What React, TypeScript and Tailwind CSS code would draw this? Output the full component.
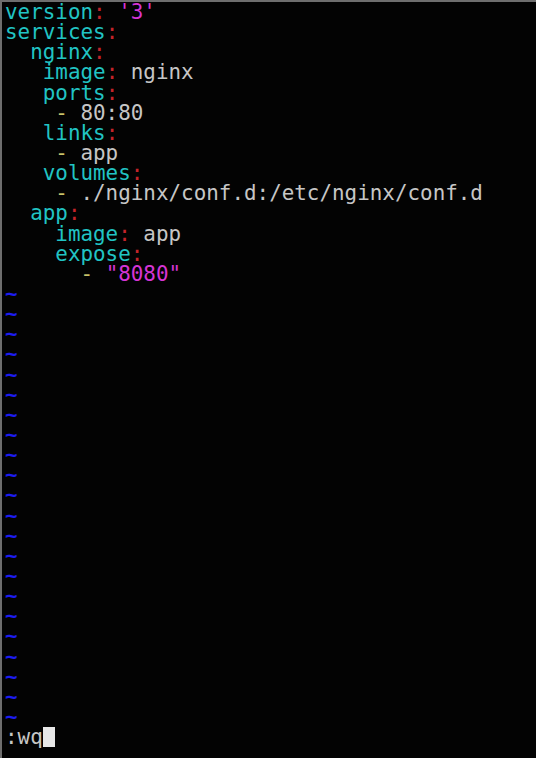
const K = ({ children }: { children: React.ReactNode }) => (
  <span className="text-[#21c4c4]">{children}</span>
);
const C = () => <span className="text-[#c4242a]">:</span>;
const V = ({ children }: { children: React.ReactNode }) => (
  <span className="text-[#c6c6c6]">{children}</span>
);
const D = () => <span className="text-[#c9c46a]">-</span>;
const M = ({ children }: { children: React.ReactNode }) => (
  <span className="text-[#d535d5]">{children}</span>
);

const Row = ({ children }: { children?: React.ReactNode }) => (
  <div className="h-[20.15px] leading-[20.15px] whitespace-pre">{children}</div>
);

const App = () => {
  const tildes = Array.from({ length: 22 });

  return (
    <div
      className="w-[536px] h-[758px] overflow-hidden bg-[#030303] border-t-2 border-l-2 border-[#6e6e6e] pl-[3px] text-[20.9px]"
      style={{ fontFamily: '"DejaVu Sans Mono", "Liberation Mono", monospace' }}
    >
      <Row>
        <K>version</K>
        <C /> <M>'3'</M>
      </Row>
      <Row>
        <K>services</K>
        <C />
      </Row>
      <Row>
        {"  "}
        <K>nginx</K>
        <C />
      </Row>
      <Row>
        {"   "}
        <K>image</K>
        <C /> <V>nginx</V>
      </Row>
      <Row>
        {"   "}
        <K>ports</K>
        <C />
      </Row>
      <Row>
        {"    "}
        <D /> <V>80:80</V>
      </Row>
      <Row>
        {"   "}
        <K>links</K>
        <C />
      </Row>
      <Row>
        {"    "}
        <D /> <V>app</V>
      </Row>
      <Row>
        {"   "}
        <K>volumes</K>
        <C />
      </Row>
      <Row>
        {"    "}
        <D /> <V>./nginx/conf.d:/etc/nginx/conf.d</V>
      </Row>
      <Row>
        {"  "}
        <K>app</K>
        <C />
      </Row>
      <Row>
        {"    "}
        <K>image</K>
        <C /> <V>app</V>
      </Row>
      <Row>
        {"    "}
        <K>expose</K>
        <C />
      </Row>
      <Row>
        {"      "}
        <D /> <M>"8080"</M>
      </Row>
      {tildes.map((_, i) => (
        <Row key={i}>
          <span className="text-[#1c1cf0] font-bold">~</span>
        </Row>
      ))}
      <Row>
        <span className="text-[#c6c6c6]">:wq</span>
        <span className="inline-block w-[12.5px] h-[20px] align-top bg-[#e8e8e8]" />
      </Row>
    </div>
  );
};

export default App;
